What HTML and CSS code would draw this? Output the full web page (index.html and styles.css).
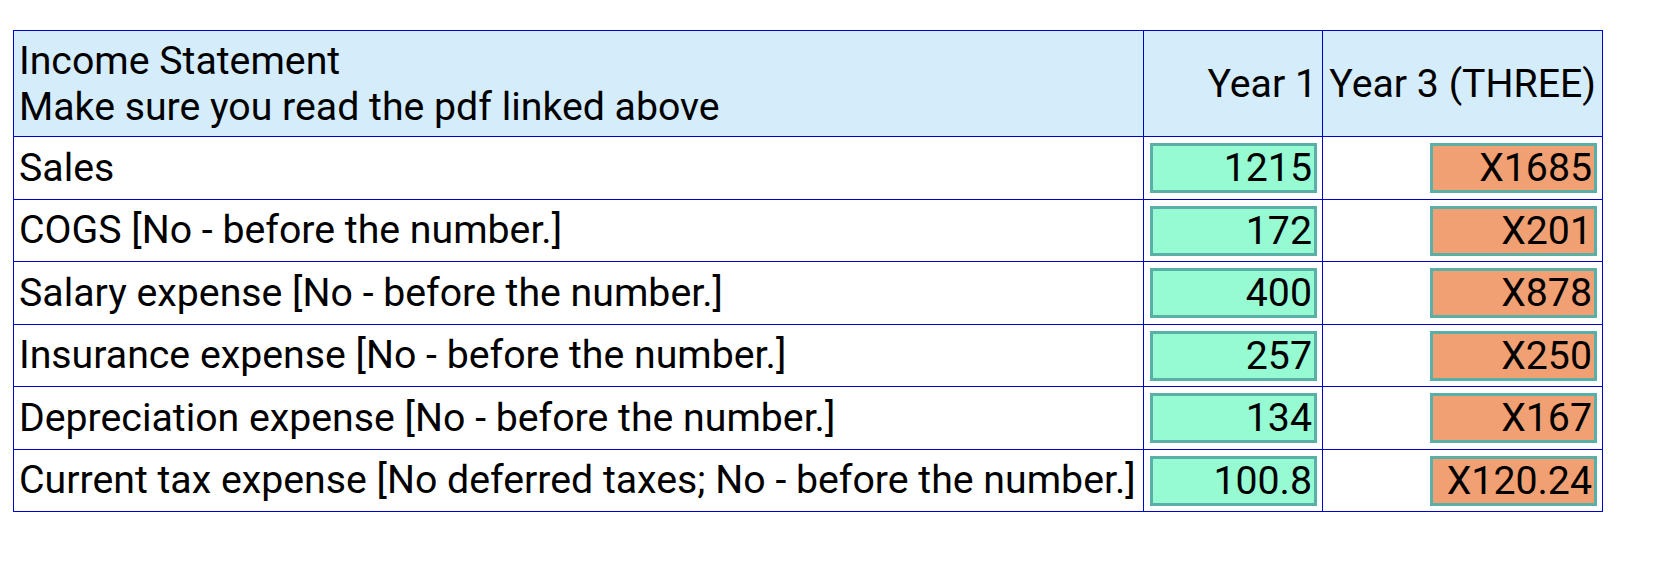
FILE: index.html
```html
<!DOCTYPE html>
<html>
<head>
<meta charset="utf-8">
<link rel="stylesheet" href="styles.css">
</head>
<body>
<table class="stmt">
  <colgroup>
    <col class="c-label">
    <col class="c-y1">
    <col class="c-y3">
  </colgroup>
  <thead>
    <tr class="head">
      <th class="label">Income Statement<br>Make sure you read the pdf linked above</th>
      <th class="year">Year 1</th>
      <th class="year">Year 3 (THREE)</th>
    </tr>
  </thead>
  <tbody>
    <tr><td class="label">Sales</td><td class="val"><span class="box ok">1215</span></td><td class="val"><span class="box bad">X1685</span></td></tr>
    <tr><td class="label">COGS [No - before the number.]</td><td class="val"><span class="box ok">172</span></td><td class="val"><span class="box bad">X201</span></td></tr>
    <tr><td class="label">Salary expense [No - before the number.]</td><td class="val"><span class="box ok">400</span></td><td class="val"><span class="box bad">X878</span></td></tr>
    <tr><td class="label">Insurance expense [No - before the number.]</td><td class="val"><span class="box ok">257</span></td><td class="val"><span class="box bad">X250</span></td></tr>
    <tr><td class="label">Depreciation expense [No - before the number.]</td><td class="val"><span class="box ok">134</span></td><td class="val"><span class="box bad">X167</span></td></tr>
    <tr><td class="label">Current tax expense [No deferred taxes; No - before the number.]</td><td class="val"><span class="box ok">100.8</span></td><td class="val"><span class="box bad">X120.24</span></td></tr>
  </tbody>
</table>
</body>
</html>
```
FILE: styles.css
```css
html, body {
  margin: 0;
  background: #ffffff;
}
body {
  padding: 30px 0 0 13px;
  font-family: Roboto, "Liberation Sans", sans-serif;
  font-size: 39.25px;
  color: #000;
}
.stmt {
  border-collapse: collapse;
  table-layout: fixed;
  width: 1589px;
}
.c-label { width: 1130px; }
.c-y1 { width: 179px; }
.c-y3 { width: 280px; }
.stmt th, .stmt td {
  border: 1px solid #0000cc;
  padding: 0 5px;
  line-height: 46px;
  font-weight: normal;
  white-space: nowrap;
}
.head {
  background: #d5ecfb;
  height: 106px;
}
.head th.label {
  text-align: left;
  vertical-align: middle;
}
.head th.year {
  text-align: right;
  vertical-align: middle;
}
.head th.year:last-child {
  padding-right: 6px;
}
tbody tr {
  height: 62.5px;
}
td.label {
  text-align: left;
  vertical-align: middle;
}
td.val {
  text-align: right;
  vertical-align: middle;
}
.box {
  display: inline-block;
  box-sizing: border-box;
  width: 167px;
  height: 50px;
  border: 3px solid #5aafa6;
  padding: 0 2px 0 0;
  line-height: 44px;
  text-align: right;
  vertical-align: middle;
}
.ok { background: #96fbd3; }
.bad { background: #f0a073; }
```
